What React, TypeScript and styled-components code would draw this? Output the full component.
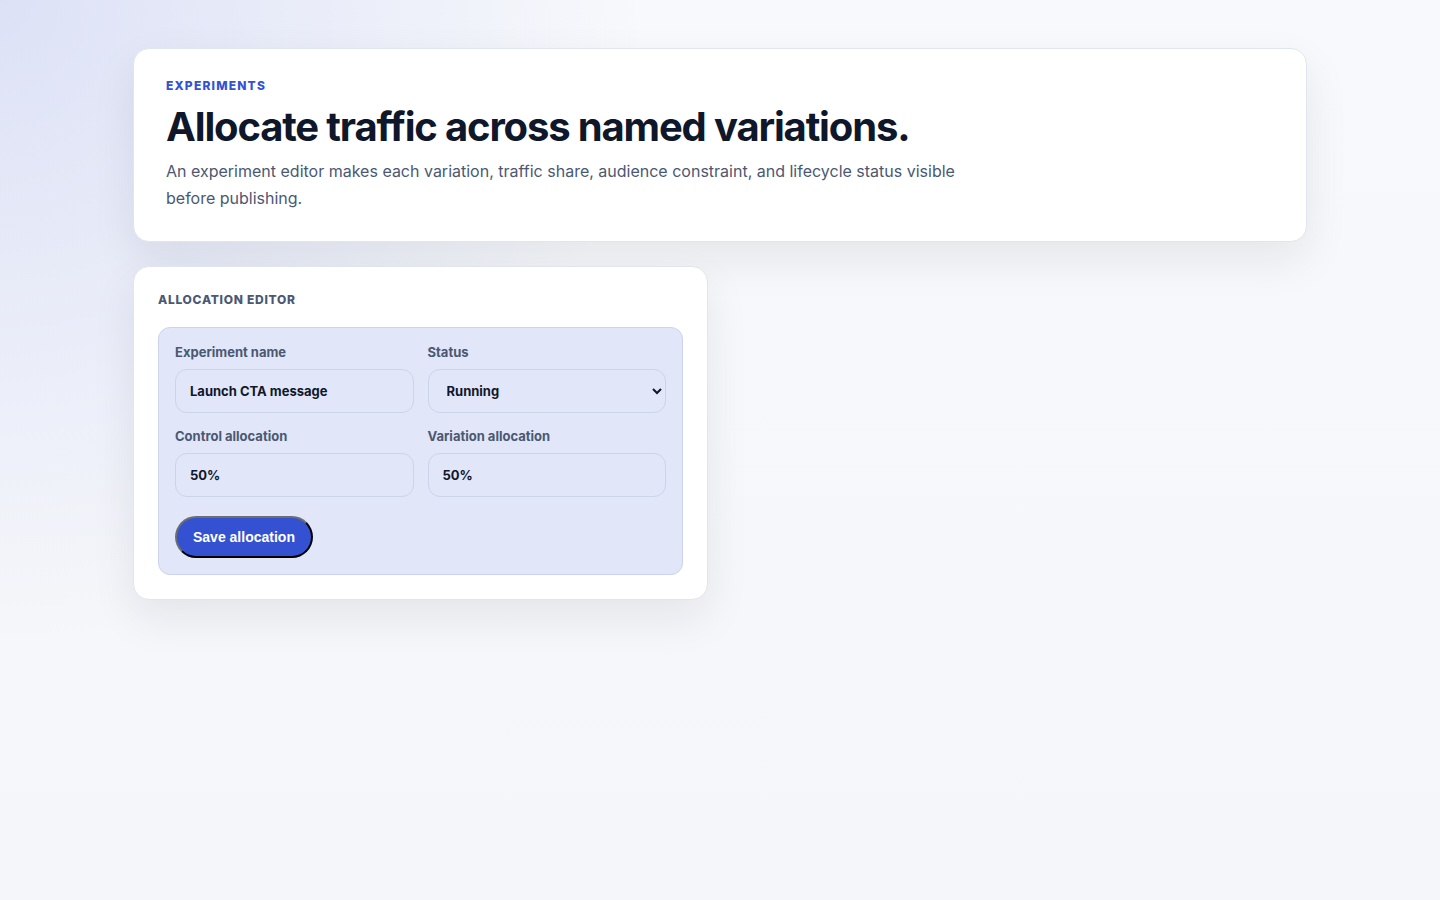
import { createGlobalStyle, styled } from 'styled-components';

const GlobalStyle = createGlobalStyle`
  * {
    box-sizing: border-box;
  }

  body {
    margin: 0;
    min-height: 100vh;
    font-family: Inter, "Noto Sans", sans-serif;
    color: #0f172a;
    background:
      radial-gradient(circle at 0% 0%, rgba(52, 81, 209, 0.14), transparent 38%),
      linear-gradient(180deg, #f8f9fc 0%, #f5f6fa 100%);
    background-attachment: fixed;
  }
`;

const Page = styled.main`
  max-width: 1174px;
  margin: 0 auto;
  padding: 48px 0;
  display: flex;
  flex-direction: column;
  gap: 24px;
`;

const Card = styled.section<{ $pad?: string }>`
  min-width: 0;
  background: #ffffff;
  border: 1px solid #e1e5ee;
  border-radius: 16px;
  padding: ${(p) => p.$pad ?? '24px'};
  box-shadow: 0 18px 45px rgba(15, 23, 42, 0.08);
`;

const Eyebrow = styled.div`
  font-size: 12px;
  line-height: 17px;
  font-weight: 800;
  letter-spacing: 0.1em;
  text-transform: uppercase;
  color: #3451d1;
`;

const Title = styled.h1`
  margin: 11px 0 0;
  font-size: 40px;
  line-height: 44px;
  font-weight: 700;
  letter-spacing: -0.029em;
  color: #0f172a;
`;

const Lede = styled.p`
  margin: 9px 0 0;
  max-width: 800px;
  font-size: 16px;
  line-height: 27px;
  color: #4b5872;
`;

const Grid = styled.div`
  display: grid;
  grid-template-columns: minmax(0, 1fr) minmax(0, 1fr);
  gap: 24px;
  align-items: start;
`;

const SectionLabel = styled.h2`
  margin: 0 0 18px;
  font-size: 12px;
  line-height: 18px;
  font-weight: 800;
  letter-spacing: 0.06em;
  text-transform: uppercase;
  color: #4b5872;
`;

const Panel = styled.form`
  display: flex;
  flex-direction: column;
  gap: 19px;
  padding: 16px;
  background: #e1e6f8;
  border: 1px solid #ccd3ec;
  border-radius: 12px;
`;

const Fields = styled.div`
  display: grid;
  grid-template-columns: minmax(0, 1fr) minmax(0, 1fr);
  gap: 15px 14px;
`;

const Field = styled.label`
  display: flex;
  flex-direction: column;
  gap: 8px;
  min-width: 0;
  font-size: 13px;
  line-height: 17px;
  font-weight: 700;
  color: #4b5872;
`;

const inputBase = `
  width: 100%;
  min-width: 0;
  height: 44px;
  padding: 0 14px;
  border: 1px solid #cdd4ea;
  border-radius: 12px;
  background: transparent;
  font-family: Inter, "Noto Sans", sans-serif;
  font-size: 13px;
  font-weight: 700;
  color: #0f172a;
`;

const Input = styled.input`
  ${inputBase}
`;

const Select = styled.select`
  ${inputBase}
  padding: 0 10px 0 14px;
`;

const SaveButton = styled.button`
  align-self: flex-start;
  padding: 10px 16px;
  border: 2px outset #1a1a1a;
  border-radius: 999px;
  background: #3451d1;
  color: #ffffff;
  font-family: "Liberation Sans", Arial, sans-serif;
  font-size: 14px;
  line-height: 18px;
  font-weight: 700;
  cursor: pointer;
`;

export default function App() {
  return (
    <>
      <GlobalStyle />
      <Page>
        <Card $pad="28px 32px 29px">
          <Eyebrow>Experiments</Eyebrow>
          <Title>Allocate traffic across named variations.</Title>
          <Lede>
            An experiment editor makes each variation, traffic share, audience constraint, and
            lifecycle status visible before publishing.
          </Lede>
        </Card>
        <Grid>
          <Card>
            <SectionLabel>Allocation editor</SectionLabel>
            <Panel onSubmit={(e) => e.preventDefault()}>
              <Fields>
                <Field>
                  Experiment name
                  <Input defaultValue="Launch CTA message" />
                </Field>
                <Field>
                  Status
                  <Select defaultValue="Running">
                    <option>Draft</option>
                    <option>Running</option>
                    <option>Paused</option>
                    <option>Completed</option>
                  </Select>
                </Field>
                <Field>
                  Control allocation
                  <Input defaultValue="50%" />
                </Field>
                <Field>
                  Variation allocation
                  <Input defaultValue="50%" />
                </Field>
              </Fields>
              <SaveButton type="submit">Save allocation</SaveButton>
            </Panel>
          </Card>
        </Grid>
      </Page>
    </>
  );
}
